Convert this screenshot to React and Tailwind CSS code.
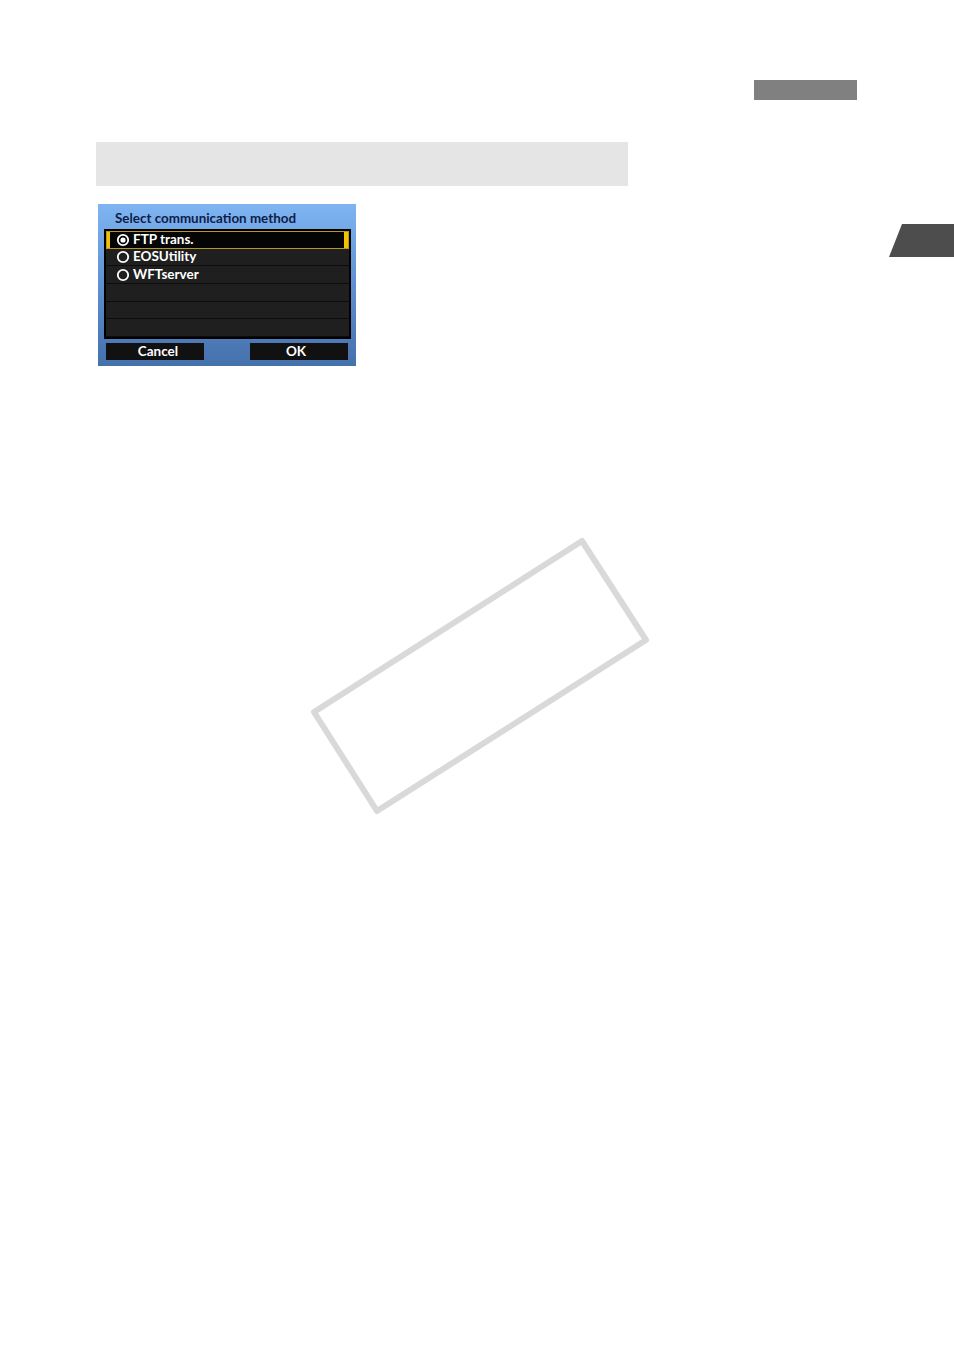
import React from "react";

function Radio({ on }) {
  return (
    <svg width="14" height="14" viewBox="0 0 14 14" className="shrink-0">
      <circle cx="7" cy="7" r="5.2" fill="none" stroke="#ffffff" strokeWidth="1.8" />
      {on && <circle cx="7" cy="7" r="2.6" fill="#ffffff" />}
    </svg>
  );
}

function Row({ label, on, selected }) {
  if (selected) {
    return (
      <div className="h-[18px] flex items-center bg-[#050505] border border-[#b8952a] relative">
        <div className="w-[3px] self-stretch bg-[#f2c200]" />
        <div className="flex items-center gap-[3px] pl-[6px] flex-1">
          <Radio on={on} />
          <span className="text-white text-[13.5px] leading-none">{label}</span>
        </div>
        <div className="w-[4px] self-stretch bg-[#f2c200]" />
      </div>
    );
  }
  return (
    <div className="h-[18px] flex items-center gap-[3px] pl-[10px] bg-[#1f1f1f] border-b border-[#0c0c0c]">
      {label && <Radio on={on} />}
      {label && <span className="text-white text-[13.5px] leading-none">{label}</span>}
    </div>
  );
}

export default function App() {
  return (
    <div
      className="relative w-[954px] h-[1351px] bg-white overflow-hidden"
      style={{ fontFamily: 'Lato, "Liberation Sans", Arial, sans-serif' }}
    >
      <div className="pt-[80px] flex flex-col">
        <div className="ml-[754px] w-[103px] h-[20px] bg-[#808080]" />
        <div className="ml-[96px] mt-[42px] w-[532px] h-[44px] bg-[#e5e5e5]" />
        <div className="mt-[18px] flex justify-between items-start">
          <div className="ml-[98px] w-[258px] h-[162px] bg-gradient-to-b from-[#7fb5f3] via-[#5f8fd0] to-[#4571ab] flex flex-col">
            <div className="h-[25px] pl-[17px] pt-[8px] text-[13.4px] leading-none font-bold text-[#0e1c48]">
              Select communication method
            </div>
            <div className="ml-[6px] w-[247px] h-[110px] border-2 border-black bg-[#1a1a1a] flex flex-col font-bold">
              <Row label="FTP trans." on selected />
              <Row label="EOSUtility" />
              <Row label="WFTserver" />
              <Row />
              <Row />
              <Row />
            </div>
            <div className="mt-[4px] flex justify-between pl-[8px] pr-[8px] font-bold">
              <div className="w-[98px] h-[17px] bg-[#111111] text-white text-[13.5px] flex items-center justify-center pl-[6px]">
                Cancel
              </div>
              <div className="w-[98px] h-[17px] bg-[#111111] text-white text-[13.5px] flex items-center justify-center pr-[6px]">
                OK
              </div>
            </div>
          </div>
          <div className="mt-[20px] w-[65px] h-[33px] bg-[#4d4d4d] [clip-path:polygon(20%_0,100%_0,100%_100%,0_100%)]" />
        </div>
      </div>
      <svg
        className="absolute left-0 top-0 pointer-events-none"
        width="954"
        height="1351"
        viewBox="0 0 954 1351"
      >
        <polygon
          points="582,541 646,640 377,811 314,712"
          fill="none"
          stroke="#d9d9d9"
          strokeWidth="6"
          strokeLinejoin="round"
        />
      </svg>
    </div>
  );
}
